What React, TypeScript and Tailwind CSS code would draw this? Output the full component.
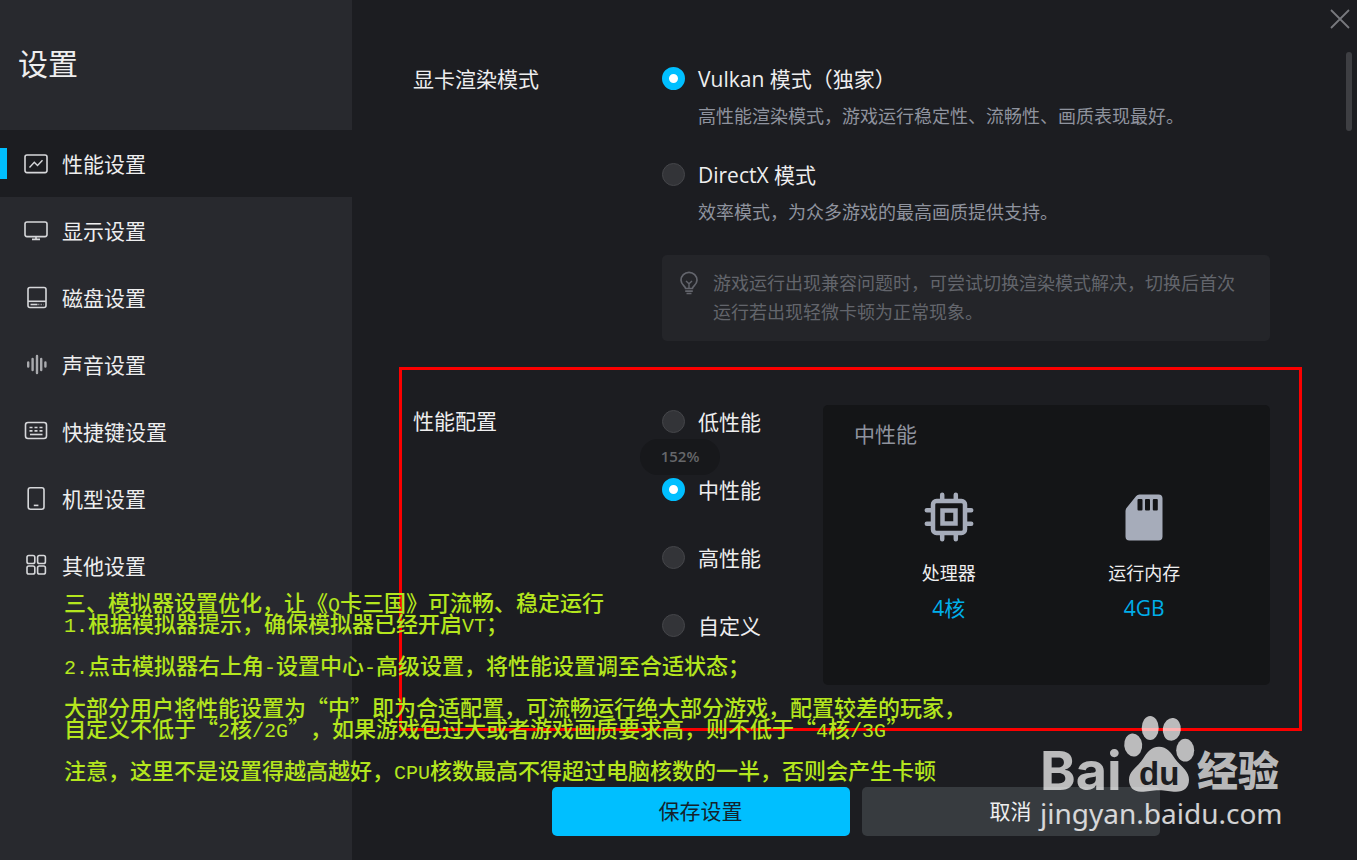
import { useState } from "react";
import type { ReactNode } from "react";

type IconProps = { children: ReactNode };

function MenuIcon({ children }: IconProps) {
  return (
    <svg viewBox="0 0 24 24" className="h-6 w-6 shrink-0" fill="none" stroke="#d6d7da" strokeWidth="1.6" aria-hidden="true">
      {children}
    </svg>
  );
}

const menu = [
  {
    label: "性能设置",
    icon: (
      <>
        <rect x="1" y="3" width="22" height="17.6" rx="2" />
        <path d="M5.5 15.5l4.8-5.2 3.2 3.2 5-5.2" strokeWidth="1.4" />
      </>
    ),
  },
  {
    label: "显示设置",
    icon: (
      <>
        <rect x="1" y="3" width="22" height="14.6" rx="2" />
        <path d="M12 17.6v2.6M8 20.4h8" />
      </>
    ),
  },
  {
    label: "磁盘设置",
    icon: (
      <>
        <rect x="4" y="1.5" width="18" height="20" rx="2" />
        <path d="M4 15.3h18" />
        <path d="M6.5 18.5h7" />
        <path d="M14 18.5h5.5" stroke="#8a8b90" strokeDasharray="1.5 1" />
      </>
    ),
  },
  {
    label: "声音设置",
    icon: (
      <g stroke="#a9aaae" strokeWidth="2.4" strokeLinecap="round">
        <path d="M4.2 9.5v4M8.6 6v11M13 3v17M17.2 6v11M21.4 9.5v4" />
      </g>
    ),
  },
  {
    label: "快捷键设置",
    icon: (
      <>
        <rect x="1.5" y="2.5" width="21" height="16" rx="2.5" />
        <path d="M5.5 7.5h13M5.5 10.9h13" strokeDasharray="3 2" />
        <path d="M6 14.5h12.5" />
      </>
    ),
  },
  {
    label: "机型设置",
    icon: (
      <>
        <rect x="4.2" y="0.8" width="15.8" height="21.4" rx="2.2" />
        <path d="M9.8 18.4h4.6" />
      </>
    ),
  },
  {
    label: "其他设置",
    icon: (
      <>
        <rect x="3" y="1.5" width="7.8" height="8" rx="1.8" />
        <rect x="13.6" y="1.5" width="7.8" height="8" rx="1.8" />
        <rect x="3" y="12" width="7.8" height="8" rx="1.8" />
        <rect x="13.6" y="12" width="7.8" height="8" rx="1.8" />
      </>
    ),
  },
];

const renderModes = [
  { id: "vulkan", label: "Vulkan 模式（独家）", desc: "高性能渲染模式，游戏运行稳定性、流畅性、画质表现最好。" },
  { id: "directx", label: "DirectX 模式", desc: "效率模式，为众多游戏的最高画质提供支持。" },
];

const levels = ["低性能", "中性能", "高性能", "自定义"];

const notes = [
  ["三、模拟器设置优化，让《Q卡三国》可流畅、稳定运行", "1.根据模拟器提示，确保模拟器已经开启VT；"],
  ["2.点击模拟器右上角-设置中心-高级设置，将性能设置调至合适状态；"],
  ["大部分用户将性能设置为“中”即为合适配置，可流畅运行绝大部分游戏，配置较差的玩家，", "自定义不低于“2核/2G”，如果游戏包过大或者游戏画质要求高，则不低于“4核/3G”"],
  ["注意，这里不是设置得越高越好，CPU核数最高不得超过电脑核数的一半，否则会产生卡顿"],
];

type RadioProps = {
  id: string;
  name: string;
  label: string;
  checked: boolean;
  onChange: () => void;
};

function Radio({ id, name, label, checked, onChange }: RadioProps) {
  return (
    <div className="flex h-[30px] items-center gap-[13px]">
      <input
        id={id}
        type="radio"
        name={name}
        checked={checked}
        onChange={onChange}
        className="mb-[2px] h-[23px] w-[23px] shrink-0 appearance-none rounded-full border border-[#45464a] bg-[#333438] checked:border-[7px] checked:border-[#00bfff] checked:bg-white"
      />
      <label htmlFor={id} className="whitespace-nowrap text-[21px] leading-[30px] text-[#eeeeef]">
        {label}
      </label>
    </div>
  );
}

// Latin runs are set in a half-width face
function NoteLine({ text }: { text: string }) {
  return (
    <p className="flex h-[21px] items-baseline whitespace-nowrap">
      {text.split(/([\x20-\x7e]+)/).map((part, i) =>
        i % 2 ? (
          <span key={i} className="font-['Liberation_Mono',monospace] text-[20px]">
            {part}
          </span>
        ) : (
          <span key={i}>{part}</span>
        )
      )}
    </p>
  );
}

function Watermark() {
  return (
    <div className="pointer-events-none absolute right-[69px] bottom-[34px] text-white/70">
      <svg viewBox="0 0 248 86" className="block h-[86px] w-[248px] overflow-visible" fill="currentColor" role="img" aria-label="Baidu 经验">
        <text x="0" y="76" fontSize="54" fontWeight="700" fontFamily="Inter, sans-serif">Bai</text>
        <ellipse cx="93.2" cy="31" rx="9" ry="11.6" transform="rotate(-6 93.2 31)" />
        <ellipse cx="110.2" cy="14" rx="8.5" ry="12" />
        <ellipse cx="131.8" cy="15.3" rx="9" ry="11.4" transform="rotate(8 131.8 15.3)" />
        <ellipse cx="145.2" cy="36.2" rx="9" ry="11.4" />
        <path d="M119 32.7c8 0 12 6 16 12 5 7 14 12 14 21 0 8-5 12-13 12-6 0-10-1.500-17-1.500s-11 1.500-18 1.500c-8 0-12-5-12-12 0-9 9-13 14-21 4-6 8-12 16-12z" />
        <text x="99" y="71" fontSize="33" fontWeight="700" fill="#1c1d21" fontFamily="Liberation Sans, sans-serif">du</text>
        <text x="157" y="72" fontSize="41" fontWeight="900" fontFamily="Noto Sans CJK SC, sans-serif">经验</text>
      </svg>
      <p className="font-['Noto_Sans',sans-serif] text-[28px] leading-[26px] text-white/80">jingyan.baidu.com</p>
    </div>
  );
}

export default function App() {
  const [active, setActive] = useState("性能设置");
  const [mode, setMode] = useState("vulkan");
  const [level, setLevel] = useState("中性能");

  return (
    <div className="relative flex min-h-screen overflow-hidden bg-[#1c1d21] font-['Open_Sans','Noto_Sans_CJK_SC',sans-serif] text-[#eeeeef]">
      <aside className="w-[352px] shrink-0 bg-[#28292e]">
        <h1 className="flex h-[130px] items-center pb-[2px] pl-[18px] text-[30px] leading-[40px]">设置</h1>
        <nav>
          {menu.map((item) => (
            <button
              key={item.label}
              type="button"
              onClick={() => setActive(item.label)}
              className={`relative flex h-[67px] w-full items-center gap-[14px] pl-6 text-left text-[21px] leading-[30px] ${
                active === item.label ? "bg-[#1c1d21]" : ""
              }`}
            >
              {active === item.label && <span className="absolute left-0 h-[31px] w-[7px] bg-[#00bfff]"></span>}
              <MenuIcon>{item.icon}</MenuIcon>
              <span>{item.label}</span>
            </button>
          ))}
        </nav>
      </aside>

      <main className="flex min-w-0 flex-1 flex-col pt-[64px] pr-[87px] pb-[24px] pl-[61px]">
        <section className="flex">
          <h2 className="w-[249px] shrink-0 text-[21px] leading-[30px]">显卡渲染模式</h2>
          <div className="min-w-0 flex-1">
            <div className="flex flex-col gap-[30px]">
              {renderModes.map((m) => (
                <div key={m.id}>
                  <Radio id={m.id} name="mode" label={m.label} checked={mode === m.id} onChange={() => setMode(m.id)} />
                  <p className="mt-2 pl-9 text-[18px] leading-[28px] text-[#8f939e]">{m.desc}</p>
                </div>
              ))}
            </div>
            <div className="mt-[29px] flex gap-3 rounded-[5px] bg-[#242529] py-[14px] pr-[26px] pl-[15px] text-[#63656c]">
              <svg viewBox="0 0 24 26" className="mt-[2px] h-[26px] w-6 shrink-0" fill="none" stroke="currentColor" strokeWidth="1.7" aria-hidden="true">
                <path d="M8.6 17.5c0-2.200-4.600-3.700-4.600-8.200a8 8 0 0116 0c0 4.500-4.600 6-4.600 8.200zM8.200 20.200h7.600M9.500 22.500h5" />
                <path d="M9 10l3 2.800 3-2.800M12 12.800v4.700" strokeWidth="1.4" />
              </svg>
              <p className="text-[18px] leading-[29px]">游戏运行出现兼容问题时，可尝试切换渲染模式解决，切换后首次运行若出现轻微卡顿为正常现象。</p>
            </div>
          </div>
        </section>

        <section className="relative mt-[64px] flex">
          <div className="pointer-events-none absolute -top-[38px] -right-[32px] -bottom-[46px] -left-[14px] border-[3px] border-[#fb0000]"></div>
          <h2 className="w-[249px] shrink-0 text-[21px] leading-[32px]">性能配置</h2>
          <div className="relative flex w-[161px] shrink-0 flex-col gap-[38px] pt-[2px]">
            {levels.map((l) => (
              <Radio key={l} id={l} name="level" label={l} checked={level === l} onChange={() => setLevel(l)} />
            ))}
            <div className="absolute top-[34px] -left-[22px] flex h-[36px] w-[80px] items-center justify-center rounded-full bg-[#17181b] pb-[2px] text-[15px] font-semibold text-[#66676a]">
              152%
            </div>
          </div>
          <div className="min-h-[280px] flex-1 rounded-[5px] bg-[#141517] pt-[14px]">
            <h3 className="pl-[31px] text-[21px] leading-[30px] text-[#8f939e]">{level}</h3>
            <div className="mt-[43px] grid grid-cols-2 px-7 text-center">
              <div>
                <svg viewBox="0 0 50 50" className="mx-auto h-[50px] w-[50px]" fill="none" stroke="#a6acba" strokeWidth="4.5" aria-hidden="true">
                  <rect x="9" y="9" width="32" height="32" rx="3.5" />
                  <rect x="18.5" y="18.5" width="13" height="13" />
                  <path d="M18.2 8V2.8M31.8 8V2.8M18.2 42v5.2M31.8 42v5.2M8 18.2H2.8M8 31.8H2.8M42 18.2h5.2M42 31.8h5.2" strokeLinecap="round" />
                </svg>
                <p className="mt-[17px] text-[18px] leading-[28px]">处理器</p>
                <p className="mt-[6px] text-[21px] leading-[30px] text-[#00aeea]">4核</p>
              </div>
              <div>
                <svg viewBox="0 0 50 50" className="mx-auto h-[50px] w-[50px]" aria-hidden="true">
                  <path d="M20.5 2.5H39.500a4 4 0 014 4V44.500a4 4 0 01-4 4H10.500a4 4 0 01-4-4V19a5 5 0 011.200-3.200L17 4.200A4.500 4.500 0 0120.500 2.500z" fill="#a6acba" />
                  <g fill="#141517">
                    <rect x="18.5" y="7" width="5" height="11.5" rx="1" />
                    <rect x="26" y="7" width="5" height="11.5" rx="1" />
                    <rect x="33.8" y="7" width="5" height="11.5" rx="1" />
                  </g>
                </svg>
                <p className="mt-[17px] text-[18px] leading-[28px]">运行内存</p>
                <p className="mt-[6px] text-[21px] leading-[30px] text-[#00aeea]">4GB</p>
              </div>
            </div>
          </div>
        </section>

        <footer className="mt-auto flex justify-center gap-3 pl-7">
          <button type="button" className="h-[49px] w-[298px] rounded-[5px] bg-[#00bfff] text-[21px] text-[#14232c]">
            保存设置
          </button>
          <button type="button" className="h-[49px] w-[298px] rounded-[5px] bg-[#373b3f] text-[21px]">
            取消
          </button>
        </footer>
      </main>

      <button type="button" aria-label="关闭" className="absolute top-[9px] right-[7px]">
        <svg viewBox="0 0 20 20" className="h-5 w-5" stroke="#77797e" strokeWidth="1.8" aria-hidden="true">
          <path d="M1 1l18 18M19 1L1 19" />
        </svg>
      </button>
      <div className="absolute top-[52px] right-[5px] h-[79px] w-[6px] rounded-full bg-[#3e3f43]"></div>

      <div className="pointer-events-none absolute top-[591px] left-[64px] flex flex-col gap-[21px] font-['Noto_Sans_CJK_SC',sans-serif] text-[22px] leading-[21px] font-medium text-[#b4e61e] [text-spacing-trim:space-all]">
        {notes.map((lines, i) => (
          <div key={i}>
            {lines.map((line) => (
              <NoteLine key={line} text={line} />
            ))}
          </div>
        ))}
      </div>

      <Watermark />
    </div>
  );
}
